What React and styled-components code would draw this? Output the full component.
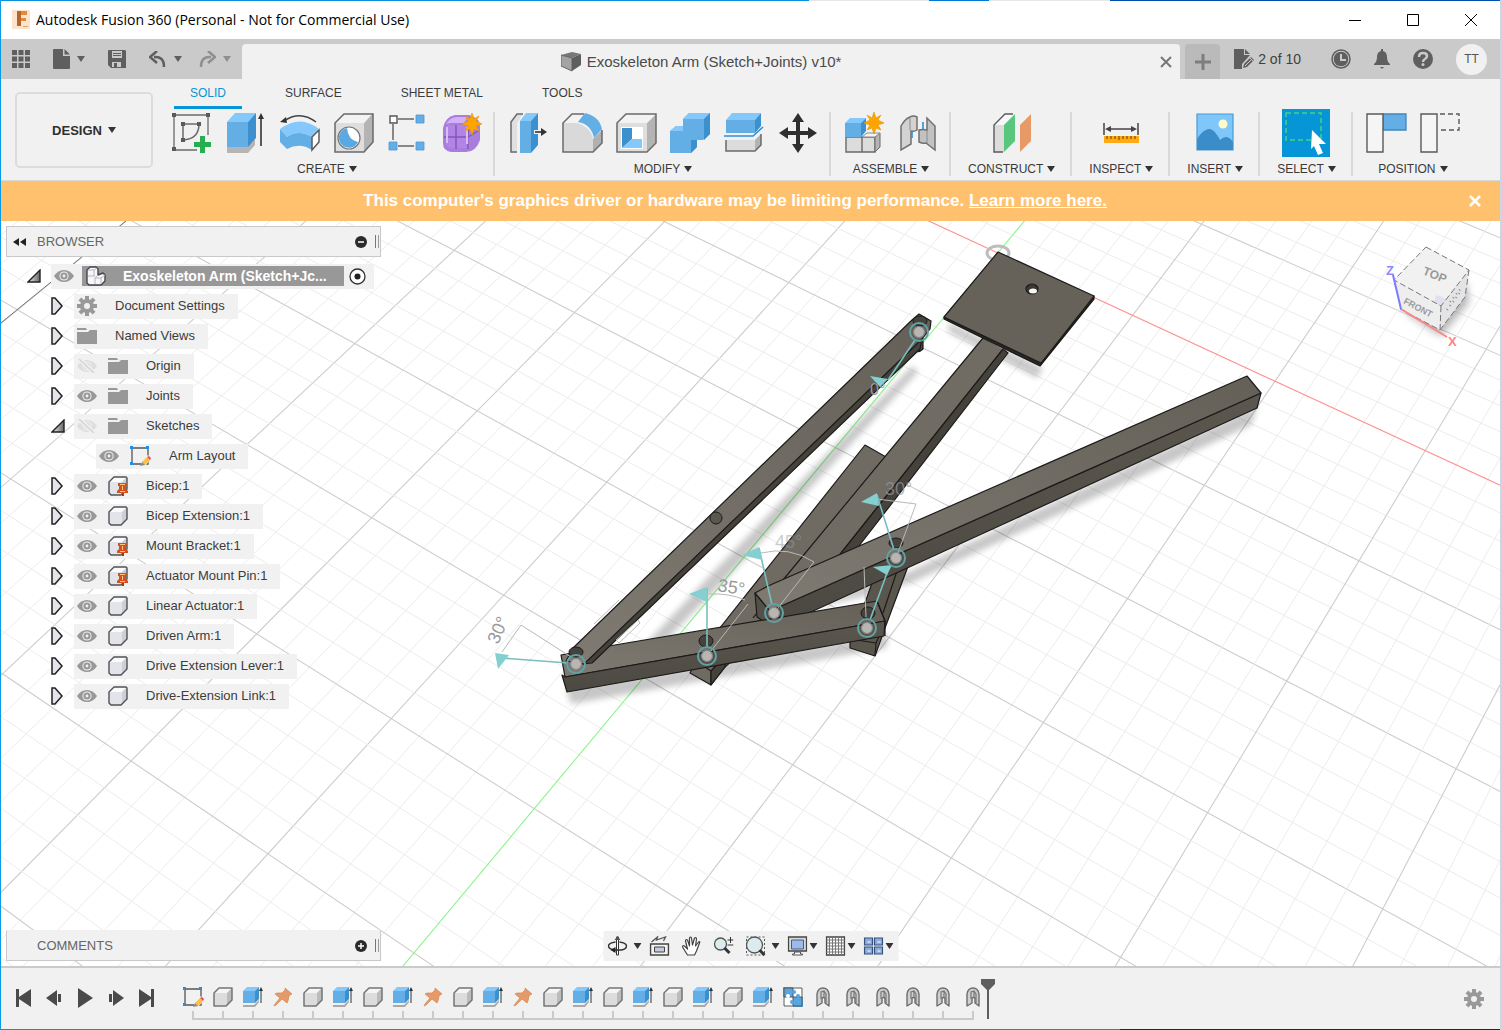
import { useState } from "react";
import styled, { createGlobalStyle } from "styled-components";

const GlobalStyle = createGlobalStyle`
  * {
    box-sizing: border-box;
  }
  body {
    margin: 0;
    font-family: "Liberation Sans", Arial, sans-serif;
    font-size: 13px;
    color: #3c3c3c;
    background: #f1f1f1;
  }
  button {
    font-family: inherit;
    font-size: inherit;
    color: inherit;
    border: none;
    background: none;
    padding: 0;
    margin: 0;
    cursor: pointer;
  }
  svg {
    display: block;
    flex: none;
  }
`;

const Window = styled.div`
  min-height: 100vh;
  display: flex;
  flex-direction: column;
  border-left: 1px solid #0a9be8;
  border-right: 1px solid #c4d8ea;
`;

const TopEdge = styled.div`
  height: 1px;
  background: linear-gradient(
    to right,
    #0a8fe0 808px,
    #e6e6e6 808px,
    #e6e6e6 928px,
    #0078d7 928px,
    #0078d7 988px,
    #e6e6e6 988px,
    #e6e6e6 1109px,
    #0050b0 1109px
  );
`;

const BottomEdge = styled.div`
  height: 1px;
  background: linear-gradient(to right, #0a8fe0 1119px, #262626 1119px);
`;

/* ---------- title bar ---------- */

const TitleBar = styled.header`
  height: 38px;
  display: flex;
  align-items: center;
  padding-left: 11px;
  background: white;
`;

const WindowTitle = styled.h1`
  flex: 1;
  margin: 0 0 0 6px;
  font-family: "Open Sans", "Noto Sans", sans-serif;
  font-size: 14px;
  font-weight: 400;
  line-height: 20px;
  color: black;
`;

const WindowButton = styled.button`
  width: 58px;
  height: 38px;
  display: flex;
  align-items: center;
  justify-content: center;
`;

/* ---------- document bar ---------- */

const DocumentBar = styled.div`
  height: 40px;
  display: flex;
  background: #cacaca;
  color: #5f5f5f;
`;

const QuickAccess = styled.div`
  width: 241px;
  display: flex;
  align-items: center;
  gap: 23px;
  padding-left: 11px;
`;

const History = styled.div`
  display: flex;
  gap: 17px;
`;

const ToolButton = styled.button`
  display: flex;
  align-items: center;
  gap: ${(props) => props.$gap || 0}px;
  opacity: ${(props) => (props.$faded ? 0.55 : 1)};
`;

const DocumentTab = styled.div`
  flex: 1;
  display: flex;
  align-items: center;
  margin-top: 5px;
  padding-right: 8px;
  border-radius: 4px 4px 0 0;
  background: #f1f1f1;
`;

const DocumentName = styled.div`
  flex: 1;
  display: flex;
  align-items: center;
  justify-content: center;
  gap: 6px;
  font-size: 15px;
  line-height: 20px;
  color: #4a4a4a;
`;

const NewTabButton = styled.button`
  width: 35px;
  margin: 5px 14px 0 5px;
  display: flex;
  align-items: center;
  justify-content: center;
  border-radius: 4px 4px 0 0;
  background: #bababa;
`;

const StatusArea = styled.div`
  display: flex;
  align-items: center;
  gap: 21px;
  padding-right: 13px;
`;

const Quota = styled.button`
  display: flex;
  align-items: center;
  gap: 4px;
  margin-right: 9px;
  font-size: 14px;
  color: #3f3f3f;
`;

const Avatar = styled.button`
  width: 31px;
  height: 31px;
  margin-left: 2px;
  border-radius: 50%;
  background: #f1f1f1;
  font-size: 12px;
  color: #555;
`;

/* ---------- ribbon ---------- */

const Ribbon = styled.section`
  display: flex;
  height: 102px;
  background: #f1f1f1;
  border-bottom: 1px solid #d8d8d8;
`;

const WorkspaceButton = styled.button`
  width: 138px;
  height: 76px;
  margin: 13px 6px 0 14px;
  display: flex;
  align-items: center;
  justify-content: center;
  gap: 6px;
  border: 2px solid #dcdcdc;
  border-radius: 5px;
  font-size: 13px;
  font-weight: 700;
  color: #2f2f2f;
`;

const RibbonBody = styled.div`
  flex: 1;
`;

const RibbonTabs = styled.div`
  display: flex;
  gap: 27px;
  height: 30px;
  padding-left: 15px;
`;

const RibbonTab = styled.button`
  height: 30px;
  padding: 0 16px;
  font-size: 12px;
  color: ${(props) => (props.$active ? "#0696d7" : "#3c3c3c")};
  border-bottom: 3px solid ${(props) => (props.$active ? "#0696d7" : "transparent")};
`;

const Groups = styled.div`
  display: flex;
`;

const Group = styled.div`
  padding: 0 13px;
  background: linear-gradient(#d9d9d9, #d9d9d9) right 3px / 2px 64px no-repeat;
  &:last-child {
    background: none;
  }
`;

const GroupIcons = styled.div`
  display: flex;
  justify-content: center;
  align-items: center;
  gap: 14px;
  height: 48px;
`;

const IconButton = styled.button`
  display: flex;
  align-items: center;
  justify-content: center;
  width: ${(props) => (props.$selected ? 48 : 40)}px;
  height: ${(props) => (props.$selected ? 48 : 40)}px;
  background: ${(props) => (props.$selected ? "#0696d7" : "transparent")};
`;

const GroupLabel = styled.button`
  display: flex;
  align-items: center;
  justify-content: center;
  gap: 4px;
  width: 100%;
  height: 23px;
  padding: 0 4px;
  font-size: 12px;
  color: #3a3a3a;
`;

/* ---------- banner ---------- */

const Banner = styled.div`
  height: 40px;
  display: flex;
  align-items: center;
  padding: 0 19px 0 0;
  background: #ffc16e;
  color: white;
`;

const BannerText = styled.p`
  flex: 1;
  margin: 0;
  text-align: center;
  font-size: 17px;
  font-weight: 700;
  line-height: 20px;
  a {
    color: white;
  }
`;

/* ---------- viewport ---------- */

const Viewport = styled.main`
  position: relative;
  flex: 1;
  display: flex;
  flex-direction: column;
  justify-content: space-between;
  align-items: flex-start;
  padding: 5px;
  overflow: hidden;
  background: white;
`;

const Scene = styled.svg`
  position: absolute;
  inset: 0;
  width: 100%;
  height: 100%;
`;

const Cube = styled.svg`
  position: absolute;
  top: 20px;
  right: 30px;
`;

const Side = styled.aside`
  position: relative;
`;

const PanelHeader = styled.div`
  position: relative;
  display: flex;
  align-items: center;
  width: 375px;
  height: 31px;
  padding: 0 1px 0 6px;
  background: #f1f1f1;
  border: 1px solid #c9c9c9;
  border-top-color: ${(props) => (props.$closed ? "#f1f1f1" : "#c9c9c9")};
  h2 {
    flex: 1;
    margin: 0 0 0 ${(props) => (props.$closed ? 24 : 11)}px;
    font-size: 13px;
    font-weight: 400;
    color: #666;
  }
`;

const Grip = styled.span`
  width: 4px;
  height: 13px;
  margin-left: 8px;
  border-left: 1px solid #777;
  border-right: 1px solid #999;
`;

const Tree = styled.ul`
  list-style: none;
  margin: 4px 0 0;
  padding: 0;
`;

const TreeRow = styled.li`
  display: flex;
  align-items: center;
  height: 30px;
  padding-left: ${(props) => props.$indent}px;
`;

const Expander = styled.button`
  width: ${(props) => (props.$root ? 24 : 23)}px;
  display: flex;
  align-items: center;
`;

const NodeBody = styled.div`
  display: flex;
  align-items: center;
  gap: 11px;
  height: 25px;
  padding: 0 13px 0 3px;
  background: #f1f1f1;
`;

const NodeName = styled.button`
  margin-left: 7px;
  font-size: 13px;
  line-height: 20px;
  color: #3c3c3c;
`;

const RootBody = styled.div`
  display: flex;
  align-items: center;
  height: 25px;
  gap: 8px;
  padding: 0 8px 0 3px;
  background: #f1f1f1;
`;

const RootName = styled.button`
  display: flex;
  align-items: center;
  gap: 17px;
  width: 262px;
  height: 20px;
  padding-left: 4px;
  margin-right: -3px;
  background: #989898;
  color: white;
  font-size: 14px;
  font-weight: 700;
`;

const NavBar = styled.nav`
  position: absolute;
  left: 50%;
  bottom: 5px;
  transform: translateX(-50%);
  display: flex;
  align-items: center;
  gap: 8px;
  height: 30px;
  padding: 0 5px 0 4px;
  background: #f1f1f1;
`;

const NavButton = styled(ToolButton)`
  margin-right: ${(props) => (props.$plain ? 4 : 0)}px;
`;

/* ---------- timeline ---------- */

const Timeline = styled.footer`
  display: flex;
  height: 63px;
  padding: 0 16px 0 10px;
  border-top: 2px solid #cacaca;
  background: #f1f1f1;
`;

const Playback = styled.div`
  display: flex;
  align-items: center;
  gap: 7px;
  height: 60px;
  margin-right: 19px;
`;

const PlayButton = styled.button`
  width: 24px;
  height: 24px;
  display: flex;
  align-items: center;
  justify-content: center;
`;

const Features = styled.ol`
  display: flex;
  list-style: none;
  margin: 0;
  padding: 0;
`;

const Feature = styled.li`
  width: 30px;
  height: 52px;
  padding-top: 19px;
  display: flex;
  flex-direction: column;
  align-items: center;
  background:
    linear-gradient(#cacaca, #cacaca) center 43px / 2px 7px no-repeat,
    linear-gradient(#cacaca, #cacaca) ${(props) => (props.$first ? "right" : "left")} bottom /
      ${(props) => (props.$first || props.$last ? 16 : 30)}px 2px no-repeat;
`;

const Marker = styled.div`
  padding-top: 11px;
  margin-left: -8px;
`;

const Spacer = styled.div`
  flex: 1;
`;

/* ---------- small icons ---------- */

const Caret = ({ color = "#333", size = 8 }) => (
  <svg width={size} height={size - 2} viewBox="0 0 8 6">
    <path d="M0 0h8L4 6z" fill={color} />
  </svg>
);

const Gear = ({ size = 20, color = "#999" }) => (
  <svg width={size} height={size} viewBox="0 0 20 20">
    <g fill={color}>
      {[0, 45, 90, 135].map((a) => (
        <rect key={a} x="8" y="0" width="4" height="20" transform={`rotate(${a} 10 10)`} />
      ))}
      <circle cx="10" cy="10" r="7" />
    </g>
    <circle cx="10" cy="10" r="3" fill="#f1f1f1" />
  </svg>
);

const Eye = ({ hidden }) => (
  <svg width="20" height="14" viewBox="0 0 20 14">
    <path d="M0 7C5-1 15-1 20 7 15 15 5 15 0 7z" fill={hidden ? "#dedede" : "#989898"} />
    <circle cx="10" cy="7" r="4.600" fill="#f1f1f1" />
    <circle cx="10" cy="7" r="3.600" fill={hidden ? "#dedede" : "#989898"} />
    <circle cx="10" cy="7" r="1.400" fill="#f1f1f1" />
    {hidden && <path d="M2 0l15 14" stroke="#f1f1f1" strokeWidth="4" />}
    {hidden && <path d="M2 0l15 14" stroke="#d4d4d4" strokeWidth="1.5" />}
  </svg>
);

const Folder = () => (
  <svg width="20" height="16" viewBox="0 0 20 16">
    <path d="M0 0h9l1 2H0zM0 4h11l2-2h7v14H0z" fill="#989898" />
  </svg>
);

const Body = ({ pinned }) => (
  <svg width="20" height="20" viewBox="0 0 20 20">
    <path d="M1 6h13l5-5v12l-6 6H3l-2-2z" fill="#e3e4e9" />
    <path d="M1 6l5-5h13l-5 5z" fill="#fbfbfc" />
    <path d="M14 6l5-5v12l-5 6z" fill="#cdced6" />
    <path d="M1 6l5-5h12l1 1v11l-6 6H3l-2-2z" fill="none" stroke="#4f5157" strokeWidth="1.4" strokeLinejoin="round" />
    {pinned && (
      <g>
        <path d="M10 7h9v3h-1v3l2 2v2H9v-2l2-2v-3h-1z" fill="#d4501c" />
        <path d="M14 17h2v3h-2z" fill="#9c3a12" />
        <path d="M12 8.500h5M14.500 10v4M12 15.500h5" stroke="#ffc27a" />
      </g>
    )}
  </svg>
);

const Component = () => (
  <svg width="20" height="20" viewBox="0 0 20 20">
    <path
      d="M1 4l3-3h6l2 2v6l5-2 2 2v6l-4 4H3l-2-2z"
      fill="#f7f7f9"
      stroke="#44464c"
      strokeWidth="1.4"
      strokeLinejoin="round"
    />
    <path d="M9 18v-6l3-3M9 12h6l4-3M15 12v6M2 10h7M2 4h6l3-2M8 4v6" stroke="#b4b6bd" fill="none" />
  </svg>
);

const SketchIcon = () => (
  <svg width="21" height="20" viewBox="0 0 21 20">
    <path d="M2 2h16v16H2z" fill="none" stroke="#555" strokeWidth="1.3" />
    <path d="M11 16l7-7 3 4-6 7h-4z" fill="#f1f1f1" />
    <path d="M12 16l5-5 3 3-5 5h-3z" fill="#ffbf45" />
    <path d="M17 11l2-1 2 2-1 2z" fill="#f04a4a" />
    <path d="M12 16l3 3-5 1z" fill="#8a8a8a" />
    <path d="M0 0h3v3H0zM16 0h3v3h-3zM0 16h3v3H0z" fill="#1c8fe8" />
  </svg>
);

const OpenArrow = () => (
  <svg width="14" height="14" viewBox="0 0 14 14">
    <defs>
      <linearGradient id="openArrow" x1="0" x2="1">
        <stop offset="0" stopColor="#eee" />
        <stop offset="1" stopColor="#666" />
      </linearGradient>
    </defs>
    <path d="M13 1v12H1z" fill="url(#openArrow)" stroke="#222" strokeWidth="1.4" />
  </svg>
);

const ClosedArrow = () => (
  <svg width="12" height="18" viewBox="0 0 12 18">
    <path d="M1 1h3l7 8-7 8H1z" fill="#e4e4ea" stroke="#222" strokeWidth="1.5" />
  </svg>
);

const RoundSign = ({ plus }) => (
  <svg width="12" height="12" viewBox="0 0 12 12">
    <circle cx="6" cy="6" r="6" fill="#2b2b2b" />
    <path d={plus ? "M3 6h6M6 3v6" : "M3 6h6"} stroke="#fff" strokeWidth="1.5" />
  </svg>
);

const Star = ({ x, y }) => (
  <path
    transform={`translate(${x} ${y})`}
    d="M0-11l2 6 5-3-3 5 6 3-6 2 3 5-5-2-2 6-2-6-5 2 3-5-6-2 6-3-3-5 5 3z"
    fill="#ffa500"
    stroke="#e59400"
    strokeWidth=".6"
  />
);

/* ---------- ribbon icons, 40 x 40 ---------- */

const icons = {
  "Create Sketch": (
    <>
      <path d="M3 2h34M2 3v34M4 37h21M36 3v19" stroke="#6b6b6b" strokeWidth="1.3" fill="none" />
      <path d="M11 11h16M11 11v16M27 11q0 15-16 16" stroke="#6b6b6b" strokeWidth="1.5" fill="none" />
      <path d="M0 0h4v4H0zM34 0h4v4h-4zM0 34h4v4H0zM9 9h4v4H9zM25 9h4v4h-4zM9 25h4v4H9z" fill="#5a5a5a" />
      <path d="M28 23h5v6h6v5h-6v6h-5v-6h-6v-5h6z" fill="#27ae4f" />
    </>
  ),
  Extrude: (
    <>
      <path d="M1 34h20l8-8v6l-7 8H1z" fill="#b5b5b5" />
      <path d="M1 9l8-9h21l-8 9z" fill="#85c8fb" />
      <path d="M1 9h21v25H1z" fill="#64aee6" />
      <path d="M22 9l8-9v25l-8 9z" fill="#3c90cd" />
      <path d="M35 33V3" stroke="#333" strokeWidth="1.6" />
      <path d="M35 0l3 6h-6z" fill="#333" />
    </>
  ),
  Revolve: (
    <>
      <path d="M4 8Q20-3 36 9" stroke="#444" strokeWidth="1.5" fill="none" />
      <path d="M0 9l6-5 1 6z" fill="#333" />
      <path d="M0 16Q20 1 39 16l-7 8q-12-8-25 0z" fill="#85c8fb" />
      <path d="M0 16l7 8v12l-7-7zM7 24q12-8 25 0v13q-12-8-25-1z" fill="#64aee6" />
      <path d="M32 24l7-7v12l-7 8z" fill="#fff" stroke="#5c5c5c" strokeWidth="1.5" />
    </>
  ),
  Hole: (
    <>
      <path d="M1 10L10 0h29v29l-9 10H1z" fill="#dedede" />
      <path d="M30 10l9-10v29l-9 10z" fill="#b4b4b4" />
      <path d="M1 10L10 0h29l-9 10z" fill="#f3f3f3" />
      <path d="M1 10l9-9h29v28l-9 10H1z" fill="none" stroke="#6a6a6a" strokeWidth="1.5" />
      <circle cx="15" cy="25" r="11" fill="#fff" stroke="#777" strokeWidth="1.2" />
      <path d="M13 15a10 10 0 1 0 11 14Q14 27 13 15z" fill="#5aa9e3" />
    </>
  ),
  Pattern: (
    <>
      <path d="M10 6h16M5 11v16M10 33h16" stroke="#666" strokeWidth="1.5" />
      <path d="M2 3h7v7H2z" fill="#fff" stroke="#555" strokeWidth="1.4" />
      <path d="M28 2h8v8h-8zM1 29h8v8H1zM28 29h8v8h-8z" fill="#64aee6" stroke="#4b98d4" strokeWidth=".8" />
    </>
  ),
  "Create Form": (
    <>
      <path d="M1 15Q3 4 13 2h14q11 3 11 12v13q-4 12-14 12H9q-8-1-8-9z" fill="#a97ddc" />
      <path d="M4 11Q9 3 16 4h10l-4 6H9z" fill="#d3b0f8" />
      <path d="M5 12h20v23H8q-4-1-4-6z" fill="#b184e6" />
      <path d="M14 12v24M2 24h24M27 13q-2 12-1 23M26 24l10-6" stroke="#8256b8" strokeWidth="1.4" fill="none" />
      <path d="M5 14v16M25 14v17" stroke="#d8bdf5" strokeWidth="2" />
      <Star x={30} y={11} />
    </>
  ),
  "Press Pull": (
    <>
      <path d="M3 10L9 1h6L9 10v29H3z" fill="#e0e0e0" />
      <path d="M15 1H9L3 9v30h6" stroke="#6a6a6a" strokeWidth="1.5" fill="none" />
      <path d="M12 8l6-8h12l-7 8z" fill="#85c8fb" />
      <path d="M12 8h11v32H12z" fill="#64aee6" />
      <path d="M23 8l7-8v32l-7 8z" fill="#3c90cd" />
      <path d="M26 19h8" stroke="#f1f1f1" strokeWidth="4" />
      <path d="M27 19h7" stroke="#333" strokeWidth="1.6" />
      <path d="M39 19l-6 4v-8z" fill="#333" />
    </>
  ),
  Fillet: (
    <>
      <path d="M1 10h14q15 5 16 17v12H1z" fill="#d9d9d9" />
      <path d="M31 26l9-9v13l-9 9z" fill="#b0b0b0" />
      <path d="M1 10L10 1h12l-6 9z" fill="#f3f3f3" />
      <path d="M22 1H10L1 10v29h30l9-9V17" fill="none" stroke="#6a6a6a" strokeWidth="1.5" />
      <path d="M23 0q14 3 17 16l-8 9Q29 11 16 9z" fill="#64aee6" />
    </>
  ),
  Shell: (
    <>
      <path d="M1 10L10 1h30v29l-9 9H1z" fill="#dedede" />
      <path d="M31 10l9-9v29l-9 9z" fill="#b4b4b4" />
      <path d="M1 10L10 1h30l-9 9z" fill="#f3f3f3" />
      <path d="M1 10l9-9h30v29l-9 9H1z" fill="none" stroke="#6a6a6a" strokeWidth="1.5" />
      <path d="M5 14h22v22H5z" fill="#fff" />
      <path d="M6 15h10v11L6 35z" fill="#3c90cd" />
      <path d="M6 35l10-9h10v9z" fill="#85c8fb" />
    </>
  ),
  Combine: (
    <>
      <path d="M0 18l6-5h7V6l6-6h21v21l-7 6h-6v7l-6 6H0z" fill="#64aee6" />
      <path d="M13 6l6-6h21l-6 6zM0 18l6-5h7v5z" fill="#85c8fb" />
      <path d="M34 6l6-6v21l-6 6zM21 27h6v7l-6 6z" fill="#3c90cd" />
    </>
  ),
  "Split Body": (
    <>
      <path d="M2 7l6-7h29l-6 7z" fill="#85c8fb" />
      <path d="M2 7h29v13H2z" fill="#64aee6" />
      <path d="M31 7l6-7v13l-6 7z" fill="#3c90cd" />
      <path d="M0 23h29l10-9" stroke="#2f8fd6" strokeWidth="1.6" fill="none" />
      <path d="M2 27h29v11H2z" fill="#dcdcdc" />
      <path d="M31 27l6-6v11l-6 6z" fill="#b4b4b4" />
      <path d="M2 27v11h29l6-6V21" fill="none" stroke="#6a6a6a" strokeWidth="1.5" />
    </>
  ),
  Move: (
    <path
      d="M20 0l6 9h-4v9h8v-4l9 6-9 6v-4h-8v9h4l-6 9-6-9h4v-9h-8v4l-9-6 9-6v4h8V9h-4z"
      fill="#2f2f2f"
    />
  ),
  "New Component": (
    <>
      <path d="M2 24h16v15H2zM18 24h13v15H18z" fill="#dcdcdc" stroke="#6a6a6a" strokeWidth="1.4" />
      <path d="M31 24l5-4v14l-5 5z" fill="#b4b4b4" stroke="#6a6a6a" />
      <path d="M18 24l5-4h13l-5 4z" fill="#f3f3f3" stroke="#8a8a8a" />
      <path d="M1 10l5-5h16l-5 5z" fill="#85c8fb" />
      <path d="M1 10h16v14H1z" fill="#64aee6" />
      <path d="M17 10l5-5v13l-5 6z" fill="#3c90cd" />
      <Star x={30} y={10} />
    </>
  ),
  Joint: (
    <>
      <path
        d="M3 13q4-7 9-9 3-2 7 0v13q-3 2-6 1v13l-10 6z"
        fill="#d2d2d2"
        stroke="#707070"
        strokeWidth="1.5"
      />
      <path d="M37 37V13l-8-8v12q-4-1-8 0v12q4 2 7 1z" fill="#c2c2c2" stroke="#707070" strokeWidth="1.5" />
      <path d="M12 5v12M29 17v13" stroke="#8a8a8a" />
      <path d="M14 18v7M25 9v7" stroke="#2f8fd6" strokeWidth="1.6" />
    </>
  ),
  "Offset Plane": (
    <>
      <path d="M2 12h10v27H2z" fill="#dcdcdc" />
      <path d="M2 12L13 1h9L12 12z" fill="#f8f8f8" />
      <path d="M11 39H2V12L13 1h8" fill="none" stroke="#5a5a5a" strokeWidth="1.4" />
      <path d="M12 12L23 1v27L12 39z" fill="#56c77c" />
      <path d="M28 12L39 1v27L28 39z" fill="#e89a66" />
    </>
  ),
  Measure: (
    <>
      <path d="M3 10v12M37 10v12M6 16h28" stroke="#444" strokeWidth="1.5" />
      <path d="M4 16l6-3v6zM36 16l-6-3v6z" fill="#444" />
      <path d="M3 23h35v7H3z" fill="#ffa914" />
      <path d="M6 23v3M10 23v3M14 23v3M18 23v4M22 23v3M26 23v3M30 23v3M34 23v3" stroke="#7b5200" strokeWidth="1.2" />
    </>
  ),
  "Insert Image": (
    <>
      <path d="M2 1h36v36H2z" fill="#7fc7fb" stroke="#4a9ad4" strokeWidth="1.2" />
      <circle cx="28" cy="11" r="4.500" fill="#fffcc9" />
      <path d="M2 26q7-11 13-10 5 1 10 11 7-7 13 2v8H2z" fill="#3b8dc9" />
    </>
  ),
  "Select Window": (
    <>
      <path d="M0 0h35v27H0z" fill="none" stroke="#48cf85" strokeWidth="1.5" strokeDasharray="5 3" />
      <path d="M26 17l14 14h-7l4 9-5 2-4-9-3 3z" fill="white" />
    </>
  ),
  "Capture Position": (
    <>
      <path d="M17 1h23v16H17z" fill="#64aee6" stroke="#4285bb" strokeWidth="1.3" />
      <path d="M1 1h16v38H1z" fill="#f5f5f5" stroke="#5a5a5a" strokeWidth="1.4" />
    </>
  ),
  "Revert Position": (
    <>
      <path d="M20 1h19v16H18" fill="none" stroke="#5a5a5a" strokeWidth="1.4" strokeDasharray="5 3" />
      <path d="M1 1h16v38H1z" fill="#f5f5f5" stroke="#5a5a5a" strokeWidth="1.4" />
    </>
  ),
};

const groups = [
  { label: "CREATE", tools: ["Create Sketch", "Extrude", "Revolve", "Hole", "Pattern", "Create Form"] },
  { label: "MODIFY", tools: ["Press Pull", "Fillet", "Shell", "Combine", "Split Body", "Move"] },
  { label: "ASSEMBLE", tools: ["New Component", "Joint"] },
  { label: "CONSTRUCT", tools: ["Offset Plane"] },
  { label: "INSPECT", tools: ["Measure"] },
  { label: "INSERT", tools: ["Insert Image"] },
  { label: "SELECT", tools: ["Select Window"] },
  { label: "POSITION", tools: ["Capture Position", "Revert Position"] },
];

const RibbonGroup = ({ group }) => (
  <Group>
    <GroupIcons>
      {group.tools.map((tool) => (
        <IconButton key={tool} aria-label={tool} $selected={tool === "Select Window"}>
          <svg width="40" height="40" viewBox="0 0 40 40" overflow="visible">
            {icons[tool]}
          </svg>
        </IconButton>
      ))}
    </GroupIcons>
    <GroupLabel>
      {group.label}
      <Caret />
    </GroupLabel>
  </Group>
);

/* ---------- browser tree ---------- */

const nodes = [
  { name: "Document Settings", icon: <Gear /> },
  { name: "Named Views", icon: <Folder /> },
  { name: "Origin", icon: <Folder />, eye: "off" },
  { name: "Joints", icon: <Folder />, eye: "on" },
  { name: "Sketches", icon: <Folder />, eye: "off", open: true },
  { name: "Arm Layout", icon: <SketchIcon />, eye: "on", child: true },
  { name: "Bicep:1", icon: <Body pinned />, eye: "on" },
  { name: "Bicep Extension:1", icon: <Body />, eye: "on" },
  { name: "Mount Bracket:1", icon: <Body pinned />, eye: "on" },
  { name: "Actuator Mount Pin:1", icon: <Body pinned />, eye: "on" },
  { name: "Linear Actuator:1", icon: <Body />, eye: "on" },
  { name: "Driven Arm:1", icon: <Body />, eye: "on" },
  { name: "Drive Extension Lever:1", icon: <Body />, eye: "on" },
  { name: "Drive-Extension Link:1", icon: <Body />, eye: "on" },
];

const BrowserTree = () => (
  <Tree>
    <TreeRow $indent={21}>
      <Expander $root aria-label="Collapse design">
        <OpenArrow />
      </Expander>
      <RootBody>
        <Eye />
        <RootName>
          <Component />
          Exoskeleton Arm (Sketch+Jc...
        </RootName>
        <svg width="17" height="17" viewBox="0 0 17 17">
          <circle cx="8.500" cy="8.500" r="7.500" fill="#fff" stroke="#333" strokeWidth="1.3" />
          <circle cx="8.500" cy="8.500" r="3" fill="#222" />
        </svg>
      </RootBody>
    </TreeRow>
    {nodes.map((node) => (
      <TreeRow key={node.name} $indent={node.child ? 90 : 45}>
        {!node.child && (
          <Expander aria-label={`Expand ${node.name}`}>{node.open ? <OpenArrow /> : <ClosedArrow />}</Expander>
        )}
        <NodeBody>
          {node.eye && <Eye hidden={node.eye === "off"} />}
          {node.icon}
          <NodeName>{node.name}</NodeName>
        </NodeBody>
      </TreeRow>
    ))}
  </Tree>
);

/* ---------- 3D scene ---------- */

// Both line families meet on one horizon, so lines are evenly spaced on any scanline.
const HORIZON = -2094;
const SCAN = 303;
const END = 1100;

const project = (vx, x) => {
  const at = (y) => vx + ((x - vx) * (y - HORIZON)) / (SCAN - HORIZON);
  return { x1: at(0), y1: 0, x2: at(END), y2: END };
};

const gridLines = [];
for (let i = -40; i <= 40; i++) {
  const major = i % 5 === 0;
  gridLines.push({ ...project(2955, 956 + i * 37.2), major, axis: i === 0 ? "#8cf58c" : null });
  gridLines.push({ ...project(-4077, 1106 - i * 55), major, axis: i === 0 ? "#ff8f8f" : null });
}
gridLines.sort((a, b) => (a.axis ? 1 : 0) - (b.axis ? 1 : 0));

const joints = [
  [576, 664],
  [707, 656],
  [774, 613],
  [896, 558],
  [867, 628],
  [919, 332],
];

const flags = [
  { line: "M568 663L502 658", head: "M495 653l14 2-11 14z" },
  { line: "M707 648V588", head: "M689 594l18-7v15z" },
  { line: "M772 605L759 548", head: "M742 555l17-8 3 13z" },
  { line: "M894 550L877 495", head: "M861 502l16-9 2 13z" },
  { line: "M870 620L887 573", head: "M873 567l19-2-5 10z" },
  { line: "M915 340L888 380", head: "M870 376l18 3-8 8z" },
];

const ModelScene = () => (
  <Scene viewBox="1 221 1499 745" preserveAspectRatio="xMidYMid slice" aria-label="Exoskeleton arm model">
    <defs>
      <filter id="soft" x="-20%" y="-20%" width="140%" height="140%">
        <feGaussianBlur stdDeviation="3" />
      </filter>
      <linearGradient id="top" x1="0" y1="1" x2="1" y2="0">
        <stop offset="0" stopColor="#7f7b73" />
        <stop offset="1" stopColor="#646057" />
      </linearGradient>
      <linearGradient id="front" x1="0" y1="0" x2="0" y2="1">
        <stop offset="0" stopColor="#5b574f" />
        <stop offset="1" stopColor="#4c4942" />
      </linearGradient>
    </defs>

    {gridLines.map((l, i) => (
      <line
        key={i}
        x1={l.x1}
        y1={l.y1}
        x2={l.x2}
        y2={l.y2}
        stroke={l.axis || (l.major ? "#cdcdcd" : "#ececec")}
        strokeWidth={l.major ? 1.1 : 1}
      />
    ))}
    <path d="M-20 340L143 207" stroke="#777" />
    <ellipse cx="998" cy="253" rx="11" ry="7" fill="none" stroke="#bdbdbd" strokeWidth="3" />

    <g filter="url(#soft)" fill="#000" opacity=".22">
      <path d="M610 682L715 570 912 366l6 6-190 205-90 92z" />
      <path d="M948 322l95 46-6 10-88-46z" />
      <path d="M860 595L1258 405l-7 20-340 158z" />
      <path d="M566 688l322-54-2 14-315 56z" />
      <path d="M790 618l90-40-6 16-60 14z" />
    </g>

    <g stroke="#1c1b19" strokeWidth="1.2" strokeLinejoin="round">
      <path d="M865 445l21 12 4 14-40 84-125 112-14 18-21-12 10-20z" fill="#6f6b63" />
      <path d="M711 685v-14l-12-8M711 671l14-4" fill="none" />
      <path d="M711 671l16-18-2 14-14 18z" fill="#45423c" />
      <path d="M983 338l20 11-166 208-90 60-22 12 58-49z" fill="#706c63" stroke="none" />
      <path d="M1003 349l5 4-156 202-15 3z" fill="#45423c" />
      <path d="M983 338L783 580l-30 38M1003 349L837 558" fill="none" />

      <path d="M872 583l38-22-25 67-10 28-25-8v-10l16-38z" fill="#5a564e" />
      <path d="M898 568l-15 45M850 639l26 4 9-20M876 643l-1 13" fill="none" />

      <path d="M755 593l15 18 6 10-4 6-15-10z" fill="#54514a" />
      <path d="M770 611L1261 393l-4 15-457 209-24 5z" fill="url(#front)" />
      <path d="M1247 376l14 17L770 611l-15-18 13-7z" fill="url(#top)" />

      <path d="M561 655l42-8 274-46 8 20-320 56z" fill="url(#top)" />
      <path d="M565 677l320-56-1 15-317 56-5-17z" fill="url(#front)" />
      <path d="M877 601l8 20v15" fill="none" />

      <path d="M912 338h11v11q-5 5-11 0z" fill="#4b4842" />
      <path d="M922 338l-2 11-328 314-9 1z" fill="#45423c" />
      <path d="M566 661l7-13 339-328 7-6 12 7-1 8-8 10-338 325z" fill="url(#top)" />

      <path d="M944 317l97 46 53-67v3l-54 67-96-47z" fill="#2b2926" />
      <path d="M998 252l96 44-53 67-97-46z" fill="#66625a" />
      <ellipse cx="1032" cy="289" rx="6" ry="5" fill="#3a3834" />
    </g>
    <ellipse cx="1033" cy="291" rx="4" ry="2.500" fill="#f4f4f4" />

    <g fill="#45423d" stroke="#1c1b19">
      <circle cx="716" cy="518" r="6" fill="#5a5750" />
      <ellipse cx="576" cy="652" rx="7" ry="5" />
      <ellipse cx="706" cy="641" rx="7" ry="6" />
      <ellipse cx="896" cy="543" rx="7" ry="5" />
      <ellipse cx="868" cy="613" rx="7" ry="6" />
      <ellipse cx="920" cy="321" rx="7" ry="5" />
    </g>

    <g fill="none" stroke="#b9b9b9">
      <path d="M571 657L521 625l-19 27M707 656l41-52M774 613l40-51M896 558l20-54-39-5M864 567l2 50" />
      <path d="M709 594q20-1 36 6M761 553q28-7 53 9" />
      <path d="M594 624l25-24M616 640l22-20 2 3-21 20z" />
    </g>
    <g fontFamily="Liberation Sans, Arial, sans-serif" fontSize="18" fill="#999">
      <text x="498" y="645" transform="rotate(-66 498 645)">
        30°
      </text>
      <text x="717" y="591" transform="rotate(9 717 591)">
        35°
      </text>
      <text x="775" y="548" fillOpacity=".5">
        45°
      </text>
      <text x="885" y="495" fillOpacity=".7">
        30°
      </text>
      <text x="870" y="395" fontSize="16">
        0°
      </text>
    </g>

    <g stroke="#77bfc0" strokeWidth="1.6" fill="#84cfcf">
      {flags.map((f) => (
        <g key={f.line}>
          <path d={f.line} />
          <path d={f.head} stroke="none" />
        </g>
      ))}
    </g>
    {joints.map(([x, y]) => (
      <g key={x}>
        <circle cx={x} cy={y} r="9" fill="none" stroke="#5fa3a6" strokeWidth="2" />
        <circle cx={x} cy={y} r="5.500" fill="#b8b6b3" stroke="#888" strokeWidth="1.2" />
      </g>
    ))}
  </Scene>
);

const ViewCube = () => (
  <Cube width="100" height="120" viewBox="1370 241 100 120" overflow="visible">
    <defs>
      <filter id="cubeShadow" x="-40%" y="-40%" width="180%" height="180%">
        <feGaussianBlur stdDeviation="4" />
      </filter>
    </defs>
    <path d="M1405 312l36 24 28-34-4-22z" fill="#000" opacity=".3" filter="url(#cubeShadow)" />
    <path d="M1394 280l47 26-1 24-40-21z" fill="#eeeeef" />
    <path d="M1441 306l28-36-4 27-25 33z" fill="#e4e4e6" />
    <path d="M1426 247l43 23-28 36-47-26z" fill="#f1f1f2" />
    <path d="M1436 295l7 2 3 4-5 5-7-4z" fill="#dfe2ee" />
    <path
      d="M1426 247l43 23-28 36-47-26zM1441 306l-1 24M1469 270l-4 27-25 33-40-21"
      fill="none"
      stroke="#777"
      strokeDasharray="6 3"
    />
    <path d="M1447 310l14-19M1450 302l12-15" stroke="#888" strokeWidth="2" strokeDasharray="1 4" />
    <path d="M1393 275l8 34" stroke="#7b7bff" strokeWidth="2" />
    <path d="M1401 309l46 28" stroke="#ff8585" strokeWidth="2" />
    <g fontFamily="Liberation Sans, Arial, sans-serif" fontWeight="700">
      <text x="1422" y="274" fontSize="12" fill="#999" transform="rotate(22 1422 274)">
        TOP
      </text>
      <text x="1403" y="303" fontSize="9" fill="#999" transform="rotate(28 1403 303)">
        FRONT
      </text>
      <text x="1386" y="275" fontSize="13" fill="#8a8aff">
        Z
      </text>
      <text x="1448" y="346" fontSize="13" fill="#ff8585">
        X
      </text>
    </g>
  </Cube>
);

/* ---------- navigation bar ---------- */

const navIcons = [
  {
    label: "Orbit",
    menu: true,
    gap: 6,
    art: (
      <>
        <path d="M9 1h2v18H9z" fill="#fff" stroke="#333" />
        <path d="M10 0l3 4H7z" fill="#555" />
        <path d="M8 6Q1 7 1 10t6 4h7q5-1 5-4t-7-4" fill="none" stroke="#333" strokeWidth="1.4" />
        <path d="M3 14l5-3v6z" fill="#222" />
      </>
    ),
  },
  {
    label: "Look At",
    art: (
      <>
        <path d="M1 8h18v11H1z" fill="#f3f3f3" stroke="#444" strokeWidth="1.5" />
        <path d="M5 11h10v5H5z" fill="#c3cbdc" stroke="#444" />
        <path d="M2 6l6-5-1 3 9-3-2 4" fill="none" stroke="#555" strokeWidth="1.3" />
      </>
    ),
  },
  {
    label: "Pan",
    art: (
      <path
        d="M6 19L1 11q0-2 2-1l3 3-2-8q0-2 2-1l2 6V2q1-2 2 0l1 7 2-7q2-1 2 1l-1 7 3-4q2-1 1 1l-3 8-2 4z"
        fill="#fff"
        stroke="#444"
        strokeWidth="1.2"
        strokeLinejoin="round"
      />
    ),
  },
  {
    label: "Zoom",
    art: (
      <>
        <circle cx="7" cy="8" r="6" fill="#dcebee" stroke="#555" strokeWidth="1.3" />
        <path d="M11 12l5 5" stroke="#333" strokeWidth="3" />
        <path d="M14 4h6M17 1v6M14 9h6" stroke="#333" />
      </>
    ),
  },
  {
    label: "Fit",
    menu: true,
    gap: 6,
    art: (
      <>
        <path d="M1 1h18v18H1z" fill="none" stroke="#555" strokeDasharray="2 2" />
        <circle cx="9" cy="9" r="8" fill="#dcebee" stroke="#555" strokeWidth="1.3" />
        <path d="M14 14l5 5" stroke="#333" strokeWidth="3" />
      </>
    ),
  },
  {
    label: "Display Settings",
    menu: true,
    gap: 2,
    art: (
      <>
        <path d="M1 1h18v14H1z" fill="#dadada" stroke="#444" strokeWidth="1.3" />
        <path d="M4 4h12v9H4z" fill="#9ebbe6" stroke="#3f5f95" />
        <path d="M7 16h6v2h2v1H5v-1h2z" fill="#fff" stroke="#555" />
      </>
    ),
  },
  {
    label: "Grid and Snaps",
    menu: true,
    gap: 2,
    art: (
      <>
        <path d="M1 1h18v18H1z" fill="#fff" stroke="#444" strokeWidth="1.4" />
        <path d="M4 1v18M7 1v18M10 1v18M13 1v18M16 1v18M1 4h18M1 7h18M1 10h18M1 13h18M1 16h18" stroke="#777" />
      </>
    ),
  },
  {
    label: "Viewports",
    menu: true,
    gap: 2,
    art: (
      <>
        <path d="M1 2h8v7H1zM11 2h8v7h-8zM1 11h8v7H1zM11 11h8v7h-8z" fill="#8facd8" stroke="#34507f" strokeWidth="1.2" />
        <path d="M4 5h3v2H4zM14 5h3v2h-3zM4 14h3v2H4zM14 14h3v2h-3z" fill="#c4d5f0" />
      </>
    ),
  },
];

/* ---------- timeline ---------- */

const timelineArt = {
  sketch: <SketchIcon />,
  body: (
    <svg width="20" height="20" viewBox="0 0 20 20">
      <path d="M1 6l5-5h13v12l-6 6H1z" fill="#dcdcdc" />
      <path d="M1 6l5-5h13l-5 5z" fill="#f5f5f5" />
      <path d="M14 6l5-5v12l-5 6z" fill="#bcbcbc" />
      <path d="M1 6l5-5h13v12l-6 6H1z" fill="none" stroke="#757575" strokeWidth="1.5" strokeLinejoin="round" />
    </svg>
  ),
  extrude: (
    <svg width="20" height="20" viewBox="0 0 20 20">
      <path d="M0 18h11l5-5v2l-4 5H0z" fill="#a9a9a9" />
      <path d="M0 4l4-4h12l-4 4z" fill="#85c8fb" />
      <path d="M0 4h12v12H0z" fill="#64aee6" />
      <path d="M12 4l4-4v12l-4 4z" fill="#3c90cd" />
      <path d="M18 16V2" stroke="#333" />
      <path d="M18 0l2 4h-4z" fill="#333" />
    </svg>
  ),
  pin: (
    <svg width="20" height="20" viewBox="0 0 20 20">
      <path
        d="M12 1l7 6-2 1-1 1-1 5-1 2-5-4-6 6-2 1 1-2 5-6-5-4 2-1 5 0 3-3z"
        fill="#e79a68"
        stroke="#c97a47"
        strokeWidth=".6"
      />
    </svg>
  ),
  rigid: (
    <svg width="20" height="20" viewBox="0 0 20 20">
      <path d="M0 0h10v10H0zM10 10h10v10H10z" fill="#58a6e0" />
      <path d="M10 0h10v10H10zM0 10h10v10H0z" fill="#fff" />
      <path d="M1 1h18v18H1zM10 1v18M1 10h18" fill="none" stroke="#555" />
      <circle cx="11" cy="5" r="2" fill="#58a6e0" />
      <circle cx="5" cy="9" r="2" fill="#fff" />
      <circle cx="15" cy="9" r="2" fill="#58a6e0" />
      <circle cx="9" cy="15" r="2" fill="#58a6e0" />
    </svg>
  ),
  joint: (
    <svg width="20" height="20" viewBox="0 0 20 20">
      <path
        d="M4 7q1-6 6-6t6 6v12l-4-3v-5q-2-1-3 0v5l-5 3z"
        fill="#cfcfcf"
        stroke="#6d6d6d"
        strokeWidth="1.4"
        strokeLinejoin="round"
      />
      <path d="M8 12V5l3-1v7M11 4l2 3v9" fill="none" stroke="#777" strokeWidth="1.2" />
    </svg>
  ),
};

const features =
  "sketch body extrude pin body extrude body extrude pin body extrude pin body extrude body extrude body extrude body extrude rigid joint joint joint joint joint joint".split(
    " "
  );

const playback = [
  { label: "Go to start", d: "M5 3h3v8l12-8v18L8 13v8H5z" },
  { label: "Step back", d: "M4 12l11-8v16zM16 8h3v8h-3z" },
  { label: "Play", d: "M5 2l15 10L5 22z" },
  { label: "Step forward", d: "M20 12L9 4v16zM5 8h3v8H5z" },
  { label: "Go to end", d: "M19 3h-3v8L4 3v18l12-8v8h3z" },
];

const ribbonTabs = ["SOLID", "SURFACE", "SHEET METAL", "TOOLS"];

export default function App() {
  const [tab, setTab] = useState("SOLID");
  const [showBanner, setShowBanner] = useState(true);

  return (
    <Window>
      <GlobalStyle />
      <TopEdge />
      <TitleBar>
        <svg width="18" height="20" viewBox="0 0 18 20">
          <path d="M0 0h18v19H0z" fill="#fbe3cd" />
          <path d="M5 1h10v4H9v3h5v3H9v5H5z" fill="#e08a3c" />
          <path d="M5 1h4v15H5z" fill="#b9652a" />
          <path d="M11 16h5v1h-5z" fill="#e0a070" />
        </svg>
        <WindowTitle>Autodesk Fusion 360 (Personal - Not for Commercial Use)</WindowTitle>
        <WindowButton aria-label="Minimize">
          <svg width="12" height="12" viewBox="0 0 12 12">
            <path d="M0 6.500h12" stroke="#000" />
          </svg>
        </WindowButton>
        <WindowButton aria-label="Maximize">
          <svg width="12" height="12" viewBox="0 0 12 12">
            <path d="M.5.5h11v11H.5z" fill="none" stroke="#000" />
          </svg>
        </WindowButton>
        <WindowButton aria-label="Close">
          <svg width="12" height="12" viewBox="0 0 12 12">
            <path d="M0 0l12 12M12 0L0 12" stroke="#000" />
          </svg>
        </WindowButton>
      </TitleBar>

      <DocumentBar>
        <QuickAccess>
          <ToolButton aria-label="Data panel">
            <svg width="18" height="18" viewBox="0 0 18 18">
              <path
                d="M0 0h5v5H0zM6.500 0h5v5h-5zM13 0h5v5h-5zM0 6.500h5v5H0zM6.500 6.500h5v5h-5zM13 6.500h5v5h-5zM0 13h5v5H0zM6.500 13h5v5h-5zM13 13h5v5h-5z"
                fill="#5f5f5f"
              />
            </svg>
          </ToolButton>
          <ToolButton aria-label="File" $gap={7}>
            <svg width="17" height="20" viewBox="0 0 17 20">
              <path d="M1 0h9v7h7v12q0 1-1 1H1q-1 0-1-1V1q0-1 1-1zM11.500 0L17 5.500h-5.500z" fill="#5f5f5f" />
            </svg>
            <Caret color="#5f5f5f" />
          </ToolButton>
          <ToolButton aria-label="Save">
            <svg width="18" height="18" viewBox="0 0 18 18">
              <path d="M1 0h16l1 1v17H3l-3-3V1q0-1 1-1z" fill="#5f5f5f" />
              <path d="M4 1h10v7H4z" fill="#cacaca" />
              <path d="M5 3h8v1H5zM5 5h8v1H5z" fill="#5f5f5f" />
              <path d="M4 12h9v5H4z" fill="#cacaca" />
              <path d="M6 13h3v4H6z" fill="#5f5f5f" />
            </svg>
          </ToolButton>
          <History>
            <ToolButton aria-label="Undo" $gap={8}>
              <svg width="17" height="16" viewBox="0 0 17 16">
                <path d="M5 6q10-1 10 10" fill="none" stroke="#5f5f5f" strokeWidth="2.500" />
                <path d="M8 0L1 6l7 6" fill="none" stroke="#5f5f5f" strokeWidth="2.500" />
              </svg>
              <Caret color="#5f5f5f" />
            </ToolButton>
            <ToolButton aria-label="Redo" $gap={7} $faded>
              <svg width="17" height="16" viewBox="0 0 17 16">
                <path d="M12 6Q2 5 2 16" fill="none" stroke="#5f5f5f" strokeWidth="2.500" />
                <path d="M9 0l7 6-7 6" fill="none" stroke="#5f5f5f" strokeWidth="2.500" />
              </svg>
              <Caret color="#5f5f5f" />
            </ToolButton>
          </History>
        </QuickAccess>
        <DocumentTab>
          <DocumentName>
            <svg width="20" height="20" viewBox="0 0 20 20">
              <path d="M0 3l11-3 9 2-9 4z" fill="#787878" />
              <path d="M0 3l11 3v13L0 14z" fill="#a3a3a3" stroke="#666" />
              <path d="M11 6l9-4v11l-9 6z" fill="#5e5e5e" />
            </svg>
            <span>Exoskeleton Arm (Sketch+Joints) v10*</span>
          </DocumentName>
          <ToolButton aria-label="Close document">
            <svg width="12" height="12" viewBox="0 0 12 12">
              <path d="M1 1l10 10M11 1L1 11" stroke="#777" strokeWidth="2" />
            </svg>
          </ToolButton>
        </DocumentTab>
        <NewTabButton aria-label="New design">
          <svg width="16" height="16" viewBox="0 0 16 16">
            <path d="M0 8h16M8 0v16" stroke="#7d7d7d" strokeWidth="3" />
          </svg>
        </NewTabButton>
        <StatusArea>
          <Quota>
            <svg width="20" height="20" viewBox="0 0 20 20">
              <path d="M0 0h10v6h6l-8 9v5H0zM11 0l5 5h-5z" fill="#5f5f5f" />
              <path d="M9 19l1-4 7-7 3 3-7 7z" fill="#5f5f5f" />
              <path d="M11 17l6-6M15 8l4 4" stroke="#cacaca" />
            </svg>
            2 of 10
          </Quota>
          <ToolButton aria-label="Job status">
            <svg width="20" height="20" viewBox="0 0 20 20">
              <circle cx="10" cy="10" r="9" fill="none" stroke="#5f5f5f" strokeWidth="1.500" />
              <circle cx="10" cy="10" r="7.300" fill="#5f5f5f" />
              <path d="M10 5v6h5" fill="none" stroke="#cacaca" strokeWidth="2" />
            </svg>
          </ToolButton>
          <ToolButton aria-label="Notifications">
            <svg width="20" height="20" viewBox="0 0 20 20">
              <path d="M9 0h2v2q4 1 4 6 0 5 3 7v1H2v-1q3-2 3-7 0-5 4-6zM8 18h4q-2 3-4 0z" fill="#5f5f5f" />
            </svg>
          </ToolButton>
          <ToolButton aria-label="Help">
            <svg width="20" height="20" viewBox="0 0 20 20">
              <circle cx="10" cy="10" r="10" fill="#5f5f5f" />
              <path d="M6 8q0-4 4-4t4 3q0 2-2 3t-2 3" fill="none" stroke="#cacaca" strokeWidth="2.500" />
              <circle cx="10" cy="15.500" r="1.500" fill="#cacaca" />
            </svg>
          </ToolButton>
          <Avatar>TT</Avatar>
        </StatusArea>
      </DocumentBar>

      <Ribbon>
        <WorkspaceButton>
          DESIGN
          <Caret />
        </WorkspaceButton>
        <RibbonBody>
          <RibbonTabs>
            {ribbonTabs.map((name) => (
              <RibbonTab key={name} $active={tab === name} onClick={() => setTab(name)}>
                {name}
              </RibbonTab>
            ))}
          </RibbonTabs>
          <Groups>
            {groups.map((group) => (
              <RibbonGroup key={group.label} group={group} />
            ))}
          </Groups>
        </RibbonBody>
      </Ribbon>

      {showBanner && (
        <Banner>
          <BannerText>
            This computer's graphics driver or hardware may be limiting performance. <a href="#learn">Learn more here.</a>
          </BannerText>
          <ToolButton aria-label="Dismiss" onClick={() => setShowBanner(false)}>
            <svg width="12" height="12" viewBox="0 0 12 12">
              <path d="M1 1l10 10M11 1L1 11" stroke="#fff" strokeWidth="2.500" />
            </svg>
          </ToolButton>
        </Banner>
      )}

      <Viewport>
        <ModelScene />
        <ViewCube />
        <Side>
          <PanelHeader>
            <ToolButton aria-label="Collapse browser">
              <svg width="13" height="8" viewBox="0 0 13 8">
                <path d="M6 0v8L0 4zM13 0v8L7 4z" fill="#222" />
              </svg>
            </ToolButton>
            <h2>BROWSER</h2>
            <ToolButton aria-label="Hide browser">
              <RoundSign />
            </ToolButton>
            <Grip />
          </PanelHeader>
          <BrowserTree />
        </Side>
        <PanelHeader $closed>
          <h2>COMMENTS</h2>
          <ToolButton aria-label="Show comments">
            <RoundSign plus />
          </ToolButton>
          <Grip />
        </PanelHeader>
        <NavBar>
          {navIcons.map((item) => (
            <NavButton key={item.label} aria-label={item.label} $gap={item.gap} $plain={!item.menu}>
              <svg width="20" height="20" viewBox="0 0 20 20">
                {item.art}
              </svg>
              {item.menu && <Caret />}
            </NavButton>
          ))}
        </NavBar>
      </Viewport>

      <Timeline>
        <Playback>
          {playback.map((item) => (
            <PlayButton key={item.label} aria-label={item.label}>
              <svg width="24" height="24" viewBox="0 0 24 24">
                <path d={item.d} fill="#4a4a4a" />
              </svg>
            </PlayButton>
          ))}
        </Playback>
        <Features>
          {features.map((kind, i) => (
            <Feature key={i} $first={i === 0} $last={i === features.length - 1}>
              {timelineArt[kind]}
            </Feature>
          ))}
        </Features>
        <Marker>
          <svg width="16" height="40" viewBox="0 0 16 40">
            <path d="M1 0h14v5L9 11v29H7V11L1 5z" fill="#5f5f5f" />
          </svg>
        </Marker>
        <Spacer />
        <ToolButton aria-label="Timeline settings">
          <Gear />
        </ToolButton>
      </Timeline>
      <BottomEdge />
    </Window>
  );
}
